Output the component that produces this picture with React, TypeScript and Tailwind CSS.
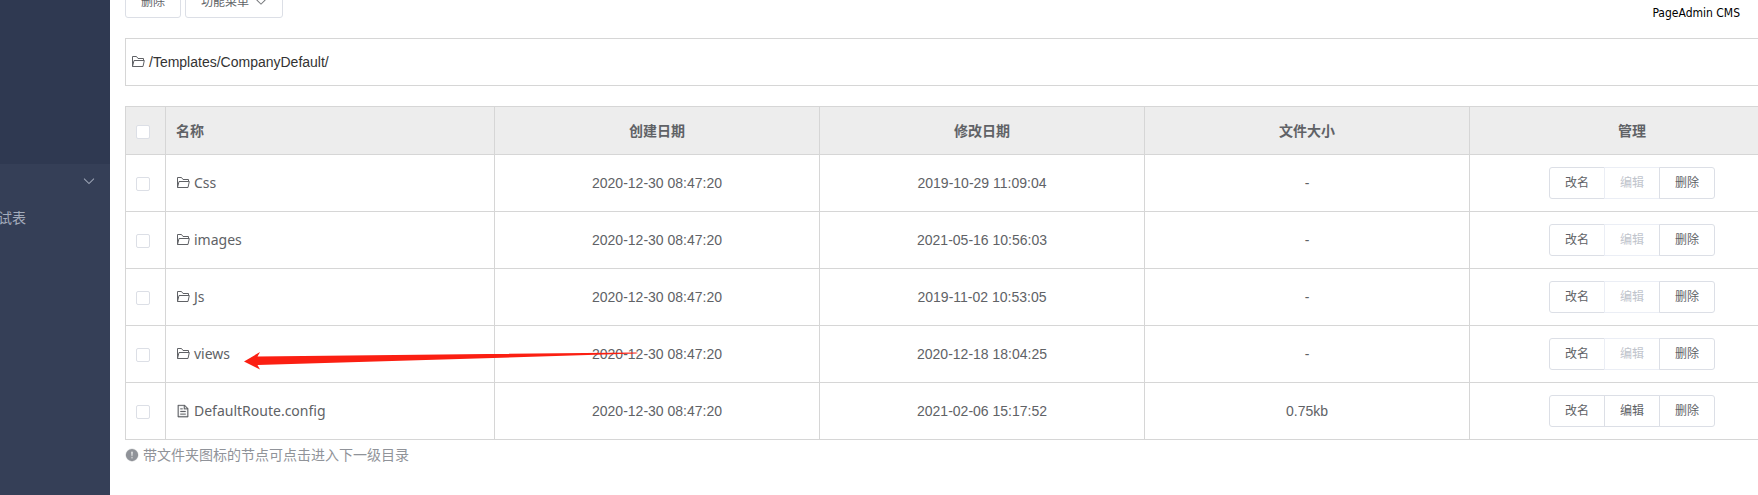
import type { ReactNode } from 'react';

const ICONS = {
  document:
    'M832 384H576V128H192v768h640V384zm-26.496-64L640 154.496V320h165.504zM160 64h480l256 256v608a32 32 0 0 1-32 32H160a32 32 0 0 1-32-32V96a32 32 0 0 1 32-32zm160 448h384v64H320v-64zm0-192h160v64H320v-64zm0 384h384v64H320v-64z',
  warning:
    'M512 64a448 448 0 1 1 0 896 448 448 0 0 1 0-896zm0 192a58.432 58.432 0 0 0-58.24 63.744l23.36 256.384a35.072 35.072 0 0 0 69.76 0l23.296-256.384A58.432 58.432 0 0 0 512 256zm0 512a51.2 51.2 0 1 0 0-102.4 51.2 51.2 0 0 0 0 102.4z',
  arrowDown:
    'M831.872 340.864 512 652.672 192.128 340.864a30.592 30.592 0 0 0-42.752 0 29.12 29.12 0 0 0 0 41.6L489.664 714.24a32 32 0 0 0 44.672 0l340.288-331.712a29.12 29.12 0 0 0 0-41.728 30.592 30.592 0 0 0-42.752 0z',
};

type IconName = keyof typeof ICONS;

interface FileRow {
  name: string;
  type: 'folder' | 'document';
  created: string;
  modified: string;
  size: string;
  marked?: boolean;
}

const files: FileRow[] = [
  { name: 'Css', type: 'folder', created: '2020-12-30 08:47:20', modified: '2019-10-29 11:09:04', size: '-' },
  { name: 'images', type: 'folder', created: '2020-12-30 08:47:20', modified: '2021-05-16 10:56:03', size: '-' },
  { name: 'Js', type: 'folder', created: '2020-12-30 08:47:20', modified: '2019-11-02 10:53:05', size: '-' },
  { name: 'views', type: 'folder', created: '2020-12-30 08:47:20', modified: '2020-12-18 18:04:25', size: '-', marked: true },
  { name: 'DefaultRoute.config', type: 'document', created: '2020-12-30 08:47:20', modified: '2021-02-06 15:17:52', size: '0.75kb' },
];

function Icon({ name, className = 'size-3.5' }: { name: IconName; className?: string }) {
  return (
    <svg viewBox="0 0 1024 1024" fill="currentColor" stroke="currentColor" strokeWidth="20" className={`shrink-0 ${className}`} aria-hidden="true">
      <path d={ICONS[name]} />
    </svg>
  );
}

function FolderIcon() {
  return (
    <svg viewBox="0 0 14 14" fill="none" stroke="currentColor" strokeLinejoin="round" className="size-3.5 shrink-0 text-[#606266]" aria-hidden="true">
      <path d="M1.5 11.5V1.5H5.5L7 3.5H12.5V5.5M1.5 11.5 3 5.5H13.3L12 11.5Z" />
    </svg>
  );
}

function Checkbox({ label }: { label: string }) {
  return (
    <input
      type="checkbox"
      aria-label={label}
      className="mt-0.5 block size-3.5 appearance-none rounded-xs border border-[#dcdfe6] bg-white checked:bg-blue-500"
    />
  );
}

function ToolButton({ children }: { children: ReactNode }) {
  return (
    <button type="button" className="flex h-8 items-center gap-1.5 rounded-[3px] border border-[#dcdfe6] bg-white px-[15px] text-xs text-[#606266]">
      {children}
    </button>
  );
}

function RowActions({ editable }: { editable: boolean }) {
  const base = 'h-8 w-14 border bg-white text-xs';
  return (
    <div className="flex justify-center">
      <button type="button" className={`${base} rounded-l-[3px] border-[#dcdfe6] text-[#606266]`}>
        改名
      </button>
      <button
        type="button"
        disabled={!editable}
        className={`${base} -mx-px ${editable ? 'border-[#dcdfe6] text-[#606266]' : 'border-[#ebeef5] text-[#c0c4cc]'}`}
      >
        编辑
      </button>
      <button type="button" className={`${base} rounded-r-[3px] border-[#dcdfe6] text-[#606266]`}>
        删除
      </button>
    </div>
  );
}

// Hand-drawn pointer laid over the row, from the date column to the name
function Pointer() {
  return (
    <svg viewBox="0 0 396 20" className="pointer-events-none absolute top-6 left-[78px] z-10 h-5 w-[396px]" aria-hidden="true">
      <path d="M0 11.5 16 2 13.5 6.5 392 2.4 394 3 392 3.6 13.5 15 16 19.5Z" fill="#fb1f12" />
    </svg>
  );
}

function Sidebar() {
  return (
    <aside className="flex w-[110px] shrink-0 flex-col overflow-hidden bg-[#353f57] text-sm text-[#a3abbb]">
      <div className="h-41 bg-[#2f3951]" />
      <button type="button" aria-label="展开" className="flex h-[34px] items-center justify-end pr-3.5">
        <Icon name="arrowDown" />
      </button>
      <a href="#form" className="-ml-0.5 flex h-10 items-center">
        试表
      </a>
    </aside>
  );
}

function FileTable() {
  const cell = 'border border-[#d6d6d6]';
  return (
    <table className="mt-5 w-full table-fixed border-collapse text-sm text-[#606266]">
      <colgroup>
        <col className="w-10" />
        <col />
        <col className="w-[325px]" />
        <col className="w-[325px]" />
        <col className="w-[325px]" />
        <col className="w-[325px]" />
      </colgroup>
      <thead className="bg-[#ededed]">
        <tr className="h-12">
          <th className={`${cell} pl-2.5`}>
            <Checkbox label="全选" />
          </th>
          <th className={`${cell} px-2.5 text-left`}>名称</th>
          <th className={cell}>创建日期</th>
          <th className={cell}>修改日期</th>
          <th className={cell}>文件大小</th>
          <th className={cell}>管理</th>
        </tr>
      </thead>
      <tbody>
        {files.map((file) => (
          <tr key={file.name} className="h-[57px] text-center">
            <td className={`${cell} pl-2.5`}>
              <Checkbox label={file.name} />
            </td>
            <td className={`${cell} relative px-2.5`}>
              <a href={`#${file.name}`} className="flex items-center gap-1 font-['Noto_Sans',sans-serif]">
                {file.type === 'folder' ? <FolderIcon /> : <Icon name="document" />}
                {file.name}
              </a>
              {file.marked && <Pointer />}
            </td>
            <td className={cell}>{file.created}</td>
            <td className={cell}>{file.modified}</td>
            <td className={cell}>{file.size}</td>
            <td className={cell}>
              <RowActions editable={file.type === 'document'} />
            </td>
          </tr>
        ))}
      </tbody>
    </table>
  );
}

export default function App() {
  return (
    <div className="flex min-h-screen overflow-hidden bg-white font-['Liberation_Sans','Noto_Sans_CJK_SC',sans-serif]">
      <Sidebar />
      {/* The content runs on past the right edge of the window */}
      <main className="-mr-[37px] min-w-0 flex-1 pl-[15px]">
        <header className="flex items-start justify-between">
          <div className="-mt-3.5 flex gap-1">
            <ToolButton>删除</ToolButton>
            <ToolButton>
              功能菜单
              <Icon name="arrowDown" className="size-3" />
            </ToolButton>
          </div>
          <span className="mt-[5px] mr-[55px] font-['DejaVu_Sans_Condensed','DejaVu_Sans',sans-serif] text-xs text-black">PageAdmin CMS</span>
        </header>
        <nav className="mt-[17px] flex h-12 items-center gap-1 border border-[#d6d6d6] px-[5px] text-sm text-[#333333]">
          <FolderIcon />
          <a href="#templates">/Templates/CompanyDefault/</a>
        </nav>
        <FileTable />
        <p className="mt-[5px] flex items-center gap-1 text-sm text-[#909399]">
          <Icon name="warning" />
          带文件夹图标的节点可点击进入下一级目录
        </p>
      </main>
    </div>
  );
}
